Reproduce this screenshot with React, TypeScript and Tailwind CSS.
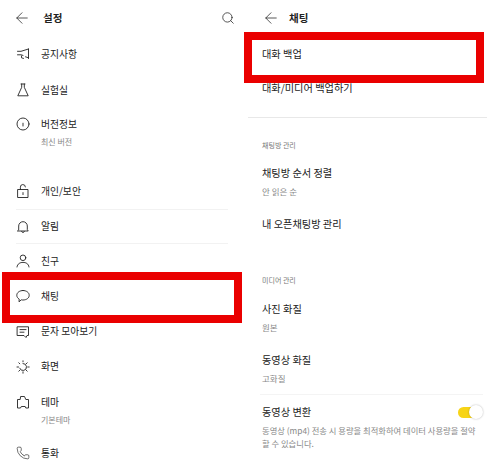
import React from "react";
import { ArrowLeft, Search, Phone } from "lucide-react";

function Ico({ children }: { children: React.ReactNode }) {
  return (
    <svg width="14" height="14" viewBox="0 0 14 14" fill="none" stroke="#222" strokeWidth="0.9" strokeLinejoin="round" strokeLinecap="round" className="shrink-0">
      {children}
    </svg>
  );
}
const Mega = () => <Ico><path d="M12.5 2v9.5" /><path d="M12.5 2 5 4.3H1.5" /><path d="M1.5 7.8H5l2 .6" /><path d="M9.5 9.8l3 1" /><path d="M5.5 9v1.8l2 .6" /></Ico>;
const Flask = () => <Ico><path d="M5 1h4" /><path d="M5.7 1v3.3L1.8 12.8h10.4L8.3 4.3V1" /></Ico>;
const InfoI = () => <Ico><circle cx="7" cy="7" r="6" /><path d="M7 6.2v2.8" /></Ico>;
const Lock = () => <Ico><rect x="2" y="5.5" width="10" height="8" /><path d="M4.4 5.5V3.2a2.5 2.5 0 0 1 5 -.3" /><path d="M7 8.6v2" /></Ico>;
const BellI = () => <Ico><path d="M1.8 11h10.4l-.9-1.5V6a4.3 4.3 0 0 0-8.6 0v3.5z" /><path d="M5.6 11.5a1.5 1.5 0 0 0 2.8 0" /></Ico>;
const UserI = () => <Ico><circle cx="7" cy="3.8" r="2.8" /><path d="M1 13c.4-3.3 3-4.6 6-4.6s5.6 1.3 6 4.6" /></Ico>;
const Bubble = () => <Ico><path d="M7 1.5c3.4 0 6.2 2 6.2 4.8S10.4 11 7 11c-.6 0-1.100 0-1.700-.2L3 12.800l.2-2.700C1.700 9.200.8 7.900.8 6.300.8 3.500 3.600 1.500 7 1.500z" /></Ico>;
const Sms = () => <Ico><path d="M1.500 1.800h11v8.700h-1.500l-1 2-2-2H1.500z" /><path d="M4 4.600h6M4 7.200h4" /></Ico>;
const Sun = () => <Ico><path d="M7 3.500a3.500 3.500 0 1 1-3.300 4.700" /><path d="M7 .8v1M1 7h1.500M11.700 7h1.500M2.800 2.800l1 1M11.200 2.800l-1 1M2.800 11.200l1-1M11.200 11.200l-1-1M7 11.800v1.400" /></Ico>;
const Theme = () => <Ico><path d="M5 1.500h3.500l1.300 3h2.700v8.500H9.800l-.6-1.500H5.300L4.500 13H1.500V4.500h2.300z" /></Ico>;
const Call = () => <Phone size={14} strokeWidth={1.1} color="#222" className="shrink-0" />;

function LeftRow({ icon: Icon, title, sub, line, h }: { icon: React.FC; title: string; sub?: string; line: string; h?: string }) {
  return (
    <div className={`flex pl-[16px] ${h ?? line}`}>
      <div className={`flex items-center ${line}`}><Icon /></div>
      <div className="ml-[11px]">
        <div className={`flex items-center text-[9.8px] text-[#222] ${line}`}>{title}</div>
        {sub && <div className="text-[8px] leading-[12px] -mt-[6px] text-[#888]">{sub}</div>}
      </div>
    </div>
  );
}
function RightRow({ title, sub, h }: { title: string; sub?: string; h: string }) {
  return (
    <div className={`pl-[18px] ${h}`}>
      <div className="text-[10.2px] leading-[18px] text-[#222]">{title}</div>
      {sub && <div className="text-[8.5px] leading-[18px] text-[#888]">{sub}</div>}
    </div>
  );
}
export default function App() {
  return (
    <div className="relative flex w-[487px] h-[464px] overflow-hidden bg-white font-['Noto_Sans_CJK_KR','Noto_Sans',sans-serif]">
      <div className="w-[244px] shrink-0">
        <div className="flex items-center h-[36px] pl-[13px] pr-[9px]">
          <ArrowLeft size={18} strokeWidth={1} color="#222" />
          <span className="ml-[12px] text-[10.5px] font-bold text-[#222]">설정</span>
          <Search size={14} strokeWidth={1.3} color="#222" className="ml-auto" />
        </div>
        <LeftRow icon={Mega} title="공지사항" line="h-[36px]" />
        <LeftRow icon={Flask} title="실험실" line="h-[36px]" h="h-[34px]" />
        <LeftRow icon={InfoI} title="버전정보" sub="최신 버전" line="h-[36px]" h="h-[67px]" />
        <LeftRow icon={Lock} title="개인/보안" line="h-[36px]" />
        <div className="mx-[16px] h-px bg-[#f2f2f2]" />
        <LeftRow icon={BellI} title="알림" line="h-[33px]" />
        <div className="mx-[16px] h-px bg-[#f2f2f2]" />
        <LeftRow icon={UserI} title="친구" line="h-[34px]" />
        <LeftRow icon={Bubble} title="채팅" line="h-[36px]" />
        <LeftRow icon={Sms} title="문자 모아보기" line="h-[35px]" />
        <LeftRow icon={Sun} title="화면" line="h-[35px]" />
        <LeftRow icon={Theme} title="테마" sub="기본테마" line="h-[36px]" h="h-[52px]" />
        <LeftRow icon={Call} title="통화" line="h-[34px]" />
      </div>
      <div className="flex-1 min-w-0">
        <div className="flex items-center h-[36px] pl-[18px]">
          <ArrowLeft size={18} strokeWidth={1} color="#222" />
          <span className="ml-[9px] text-[10.5px] font-bold text-[#222]">채팅</span>
        </div>
        <RightRow title="대화 백업" h="h-[34px] pt-[9px]" />
        <RightRow title="대화/미디어 백업하기" h="h-[47px] pt-[9px]" />
        <div className="ml-[4px] h-px bg-[#e8e8e8]" />
        <div className="pl-[18px] h-[46px] pt-[22px] text-[7px] leading-[10px] text-[#777]">채팅방 관리</div>
        <RightRow title="채팅방 순서 정렬" sub="안 읽은 순" h="h-[51px]" />
        <RightRow title="내 오픈채팅방 관리" h="h-[43px]" />
        <div className="pl-[18px] h-[42px] pt-[17px] text-[7px] leading-[10px] text-[#777]">미디어 관리</div>
        <RightRow title="사진 화질" sub="원본" h="h-[51px]" />
        <RightRow title="동영상 화질" sub="고화질" h="h-[34px]" />
        <div className="mt-[9px] ml-[16px] mr-[4px] h-px bg-[#f4f4f4]" />
        <div className="pl-[18px] pr-[4px] pt-[8px]">
          <div className="flex items-center justify-between">
            <span className="text-[10.2px] leading-[18px] text-[#222]">동영상 변환</span>
            <span className="relative flex items-center w-[26px] h-[14px]">
              <span className="ml-[1px] w-[18px] h-[11px] rounded-full bg-[#f7d417]" />
              <span className="absolute right-0 top-0 w-[14px] h-[14px] rounded-full bg-white shadow-[0_0_2px_rgba(0,0,0,0.3)]" />
            </span>
          </div>
          <p className="mt-[3px] text-[8.3px] leading-[13px] text-[#888]">동영상 (mp4) 전송 시 용량을 최적화하여 데이터 사용량을 절약할 수 있습니다.</p>
        </div>
      </div>
      <div className="absolute left-[2px] top-[272px] w-[240px] h-[51px] border-[8px] border-[#ea0000]" />
      <div className="absolute left-[244px] top-[32px] w-[240px] h-[51px] border-[8px] border-[#ea0000]" />
    </div>
  );
}
